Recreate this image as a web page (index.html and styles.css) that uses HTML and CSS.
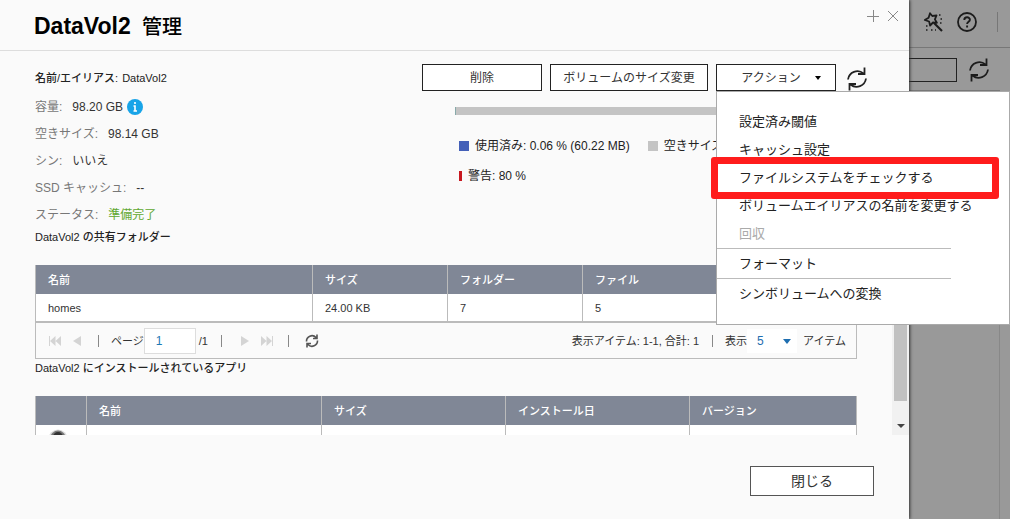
FILE: index.html
```html
<!DOCTYPE html>
<html lang="ja">
<head>
<meta charset="utf-8">
<title>DataVol2 管理</title>
<link rel="stylesheet" href="styles.css">
</head>
<body>
<svg class="defs" aria-hidden="true">
  <symbol id="refresh" viewBox="0 0 20 24">
    <path d="M1 12.500A9.500 9.500 0 0 1 16.500 6.500M17.500 .5v6.500h-6.500M19 11.500A9.500 9.500 0 0 1 3.500 17.500M2.500 23.500v-6.500h6.500" fill="none" stroke="currentColor" stroke-width="1.800"/>
  </symbol>
</svg>

<div class="backdrop">
  <div class="topbar">
    <svg class="wand" viewBox="0 0 20 20" aria-hidden="true">
      <path d="M7 1.200L9.300 4l4.200-.6-1.600 4 2 3.400-3.900-.3-2.900 3-1-4L1.800 8l3.800-2.300z" fill="none" stroke="currentColor" stroke-width="1.800" stroke-linejoin="round"/>
      <path d="M11 11l8 8" stroke="currentColor" stroke-width="2.200"/>
      <path d="M16 3h1.500M17.500 7h1.500M17 11h1.500M3 14h1.500M3 18h1.500M8 18h1.500M12 18h1" stroke="currentColor" stroke-width="1.300"/>
    </svg>
    <svg class="help" viewBox="0 0 20 20" aria-hidden="true">
      <circle cx="10" cy="10" r="9" fill="none" stroke="currentColor" stroke-width="1.800"/>
      <path d="M7.300 8c0-3.600 5.600-3.500 5.600-.3 0 2-2.800 2.100-2.800 4.300M10.100 13.500v2" fill="none" stroke="currentColor" stroke-width="1.900"/>
    </svg>
    <span class="topbar-line"></span>
  </div>
  <div class="subbar">
    <span class="ghost-button"></span>
    <svg class="refresh" aria-hidden="true"><use href="#refresh"/></svg>
  </div>
  <div class="backdrop-panel"></div>
</div>

<main class="dialog">
  <header class="dialog-head">
    <h1>DataVol2 <span>管理</span></h1>
    <div class="window-buttons">
      <button type="button" aria-label="最大化"><svg viewBox="0 0 12 12"><path d="M6.500 0v12M0 6.500h12"/></svg></button>
      <button type="button" aria-label="閉じる"><svg viewBox="0 0 12 12"><path d="M1 1l10 10M11 1L1 11"/></svg></button>
    </div>
  </header>

  <div class="dialog-body">
    <div class="content">
      <section class="summary">
        <dl class="facts">
          <div class="name"><dt>名前/エイリアス:</dt><dd>DataVol2</dd></div>
          <div><dt>容量:</dt><dd>98.20 GB</dd>
            <svg class="info" viewBox="0 0 16 16" aria-hidden="true"><circle cx="8" cy="8" r="8" fill="#18a4e8"/><path d="M8 3v2M6.500 7H8v5M6.500 12h3.500" fill="none" stroke="#fff" stroke-width="1.600"/></svg>
          </div>
          <div><dt>空きサイズ:</dt><dd>98.14 GB</dd></div>
          <div><dt>シン:</dt><dd>いいえ</dd></div>
          <div><dt>SSD キャッシュ:</dt><dd>--</dd></div>
          <div><dt>ステータス:</dt><dd class="ready">準備完了</dd></div>
        </dl>
        <div class="usage">
          <div class="toolbar">
            <button type="button" class="button">削除</button>
            <button type="button" class="button wide">ボリュームのサイズ変更</button>
            <button type="button" class="button menu-button" aria-expanded="true">アクション<span class="caret"></span></button>
            <button type="button" class="icon-button" aria-label="更新"><svg class="refresh"><use href="#refresh"/></svg></button>
          </div>
          <div class="meter"></div>
          <ul class="legend">
            <li><i class="used"></i>使用済み: 0.06 % (60.22 MB)</li>
            <li><i class="free"></i>空きサイズ</li>
            <li class="line"><i class="warn"></i>警告: 80 %</li>
          </ul>
        </div>
      </section>

      <h2>DataVol2 の共有フォルダー</h2>
      <table class="shares">
        <colgroup><col class="c-name"><col class="c-num"><col class="c-num"><col></colgroup>
        <thead><tr><th>名前</th><th>サイズ</th><th>フォルダー</th><th>ファイル</th></tr></thead>
        <tbody><tr><td>homes</td><td>24.00 KB</td><td>7</td><td>5</td></tr></tbody>
      </table>
      <div class="pager">
        <button type="button" disabled aria-label="最初"><svg viewBox="0 0 12 10"><path d="M0 0h1v10H0zM6.500 0v10L1 5zM12 0v10L6.500 5z"/></svg></button>
        <button type="button" disabled aria-label="前へ"><svg viewBox="0 0 12 10"><path d="M10 0v10L2 5z"/></svg></button>
        <span class="divider"></span>
        <label for="page">ページ</label>
        <input id="page" type="text" value="1">
        <span class="total">/1</span>
        <span class="divider after-total"></span>
        <button type="button" disabled aria-label="次へ"><svg viewBox="0 0 12 10"><path d="M2 0v10l8-5z"/></svg></button>
        <button type="button" disabled aria-label="最後"><svg viewBox="0 0 12 10"><path d="M0 0v10l5.500-5zM5.500 0v10L11 5zM11 0h1v10h-1z"/></svg></button>
        <span class="divider"></span>
        <button type="button" class="reload" aria-label="更新"><svg viewBox="0 0 14 14"><path d="M1.500 7.500A5.500 5.500 0 0 1 11 3.500M12 .5v4H8M12.500 6.500A5.500 5.500 0 0 1 3 10.500M2 13.500v-4h4" fill="none" stroke="#555" stroke-width="1.600"/></svg></button>
        <span class="shown">表示アイテム: 1-1, 合計: 1</span>
        <span class="divider small"></span>
        <label for="size">表示</label>
        <span class="select"><select id="size"><option>5</option></select></span>
        <span>アイテム</span>
      </div>

      <h2>DataVol2 にインストールされているアプリ</h2>
      <table class="apps">
        <colgroup><col class="c-icon"><col class="c-app"><col class="c-mid"><col class="c-mid"><col></colgroup>
        <thead><tr><th></th><th>名前</th><th>サイズ</th><th>インストール日</th><th>バージョン</th></tr></thead>
        <tbody><tr><td><svg class="app-icon" viewBox="0 0 20 20" aria-hidden="true"><circle cx="10" cy="10" r="9.500" fill="#ddd"/><circle cx="10" cy="9" r="7.500" fill="#777"/><circle cx="10" cy="8" r="5" fill="#333"/></svg></td><td></td><td></td><td></td><td></td></tr></tbody>
      </table>
    </div>
    <div class="scrollbar"><span class="thumb"></span><span class="down"></span></div>
  </div>

  <footer class="dialog-foot"><button type="button" class="close">閉じる</button></footer>

  <div class="menu" role="menu">
    <button type="button" role="menuitem">設定済み閾値</button>
    <button type="button" role="menuitem">キャッシュ設定</button>
    <button type="button" role="menuitem" class="marked">ファイルシステムをチェックする</button>
    <button type="button" role="menuitem">ボリュームエイリアスの名前を変更する</button>
    <button type="button" role="menuitem" disabled>回収</button>
    <hr>
    <button type="button" role="menuitem">フォーマット</button>
    <hr>
    <button type="button" role="menuitem">シンボリュームへの変換</button>
  </div>
</main>
</body>
</html>
```
FILE: styles.css
```css
* { box-sizing: border-box; }
html, body { height: 100%; }
body {
  margin: 0;
  position: relative;
  overflow: hidden;
  background: #999;
  color: #333;
  font: 12px/18px "Liberation Sans", "Noto Sans CJK JP", sans-serif;
}
button, input, select { font: inherit; color: inherit; }
button { padding: 0; border: 0; background: none; }
svg { display: block; }
.defs { position: absolute; width: 0; height: 0; }

.backdrop { height: 100%; display: flex; flex-direction: column; color: #1c1c1c; }
.topbar {
  height: 48px;
  padding: 0 12px 4px;
  border-bottom: 1px solid #777;
  display: flex;
  align-items: center;
  justify-content: flex-end;
}
.wand { width: 20px; height: 20px; margin-right: 14px; }
.help { width: 20px; height: 20px; margin-right: 20px; }
.topbar-line { width: 1px; height: 20px; background: #777; }
.subbar {
  height: 43px;
  margin-right: 10px;
  padding: 2px 11px 0 0;
  border-bottom: 1px solid #777;
  display: flex;
  align-items: center;
  justify-content: flex-end;
  gap: 12px;
}
.ghost-button { width: 120px; height: 24px; border: 1px solid #222; }
.refresh { width: 20px; height: 24px; }
.backdrop-panel { flex: 1; margin-right: 10px; border-right: 1px solid #888; }

.dialog {
  position: absolute;
  inset: 0 101px 0 0;
  background: #fafafa;
  box-shadow: 1px 0 3px #333;
  display: flex;
  flex-direction: column;
}
.dialog-head {
  height: 51px;
  flex: none;
  padding: 0 10px 0 34px;
  border-bottom: 1px solid #ddd;
  display: flex;
  justify-content: space-between;
}
h1 {
  margin: 11px 0 0;
  color: #000;
  font: bold 23px/30px "Liberation Sans", "Noto Sans CJK JP", sans-serif;
}
h1 span { font-size: 20px; font-weight: 500; margin-left: 5px; }
.window-buttons { display: flex; gap: 8px; padding-top: 10px; height: 22px; }
.window-buttons svg { width: 12px; height: 12px; fill: none; stroke: #888; }

.dialog-body { flex: 1; min-height: 0; display: flex; }
.content { flex: 1; min-width: 0; padding: 13px 35px 0; overflow: hidden; }
.summary { display: flex; justify-content: space-between; height: 164px; }
.facts { margin: 0; }
.facts div { height: 27px; display: flex; align-items: center; gap: 10px; }
.facts .name { height: 29px; gap: 4px; padding-bottom: 2px; color: #222; font-size: 11px; font-weight: 500; }
.facts dt { color: #777; }
.facts .name dt { color: #222; }
.facts dd { margin: 0; }
.facts .ready { color: #60a830; }
.facts .info { width: 16px; height: 16px; margin-left: -6px; }
.usage { width: 435px; margin-right: -11px; }
.toolbar { display: flex; gap: 8px; margin-left: -11px; }
.button {
  flex: none;
  width: 120px;
  height: 27px;
  border: 1px solid #222;
  background: #fff;
  display: flex;
  align-items: center;
  justify-content: center;
}
.wide { width: 158px; }
.menu-button { padding-left: 10px; gap: 14px; }
.caret { border: 3px solid transparent; border-top: 4px solid #000; border-bottom: 0; }
.icon-button { color: #222; margin: 3px 0 0 3px; height: 24px; }
.meter { height: 8px; margin: 16px 11px 0 22px; border-left: 1px solid #8aa; background: #c4c4c4; }
.legend {
  list-style: none;
  margin: 22px 0 0 26px;
  padding: 0;
  display: flex;
  flex-wrap: wrap;
  gap: 12px 18px;
  color: #222;
}
.legend li { display: flex; align-items: center; gap: 6px; }
.legend .line { width: 100%; }
.legend i { width: 10px; height: 10px; }
.used { background: #4460b8; }
.free { background: #c4c4c4; }
.legend .warn { width: 3px; background: #c81820; }

h2 { margin: 0; font-size: 11px; font-weight: 500; line-height: 18px; color: #222; }
table { width: 100%; border-collapse: collapse; table-layout: fixed; margin-top: 19px; background: #fff; font-size: 11px; }
th, td { padding: 0 0 0 12px; text-align: left; border: 1px solid #bbb; font-weight: 400; }
th { height: 29px; background: #808796; color: #fff; border-top: 0; border-bottom: 0; font-weight: 500; }
td { height: 28px; border-top: 0; }
.shares tbody { border-bottom: 2px solid #bbb; }
.c-name { width: 277px; }
.c-num { width: 135px; }
.c-icon { width: 51px; }
.c-app { width: 235px; }
.c-mid { width: 184px; }
.app-icon { width: 20px; height: 20px; }

.pager {
  height: 36px;
  padding: 0 10px 0 13px;
  border: 1px solid #bbb;
  border-top: 0;
  display: flex;
  align-items: center;
  font-size: 11px;
}
.pager button { width: 12px; margin-right: 10px; }
.pager button svg { width: 12px; height: 10px; fill: #d4d4d4; }
.pager .reload, .pager .reload svg { width: 14px; height: 14px; }
.divider { width: 1px; height: 12px; margin: 0 12px 0 5px; background: #888; }
.after-total { margin: 0 17px 0 13px; }
.pager .reload { margin-left: 4px; }
.pager input {
  width: 52px;
  height: 26px;
  padding: 0 11px;
  border: 1px solid #ddd;
  background: #fff;
  color: #1e78b4;
  font-size: 12px;
}
.total { margin-left: 3px; }
.shown { margin-left: auto; }
.small { margin: 0 12px 0 13px; }
.select { position: relative; margin-right: 6px; }
.select select {
  appearance: none;
  display: block;
  width: 50px;
  height: 24px;
  padding: 0 10px;
  border: 0;
  background: #fff;
  color: #1e6eb0;
  font-size: 12px;
}
.select::after {
  content: "";
  position: absolute;
  right: 6px;
  top: 10px;
  border: 4px solid transparent;
  border-top: 5px solid #1e6eb0;
  border-bottom: 0;
  pointer-events: none;
}

.scrollbar {
  width: 17px;
  margin-top: 41px;
  background: #f1f1f1;
  display: flex;
  flex-direction: column;
  align-items: center;
}
.thumb { width: 13px; flex: 1; margin-bottom: 23px; background: #c1c1c1; }
.down { border: 4px solid transparent; border-top-color: #444; margin-bottom: 3px; }

.dialog-foot { height: 84px; flex: none; padding: 31px 35px 0; display: flex; justify-content: flex-end; align-items: flex-start; }
.close { width: 124px; height: 30px; border: 1px solid #555; background: #fff; font-size: 14px; }

.menu {
  position: absolute;
  top: 91px;
  right: -101px;
  width: 294px;
  padding: 16px 0;
  border: 1px solid #aaa;
  background: #fff;
  color: #222;
  font-size: 13px;
}
.menu button { display: block; position: relative; width: 100%; height: 28px; padding-left: 22px; text-align: left; }
.menu button:disabled { color: #aaa; }
.menu hr { width: 234px; height: 1px; margin: 0 0 1px; border: 0; background: #bbb; }
.marked::after {
  content: "";
  position: absolute;
  inset: -7px 10px -7px -6px;
  border: 7px solid #ff1c1c;
  border-radius: 3px;
  z-index: 1;
}
```
